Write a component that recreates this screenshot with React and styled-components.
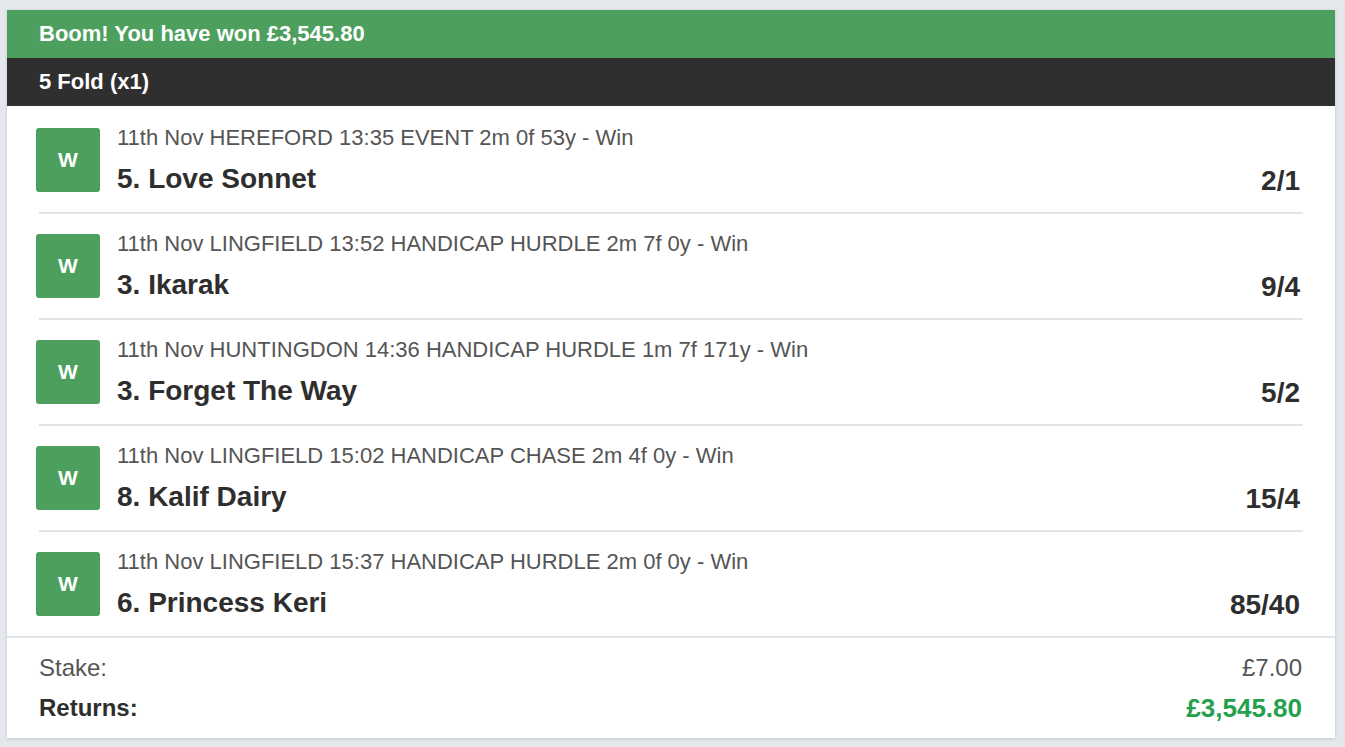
import styled, { createGlobalStyle } from "styled-components";

const GlobalStyle = createGlobalStyle`
  body {
    margin: 0;
    background: #e4e8ec;
    font-family: "Liberation Sans", Arial, Helvetica, sans-serif;
  }
`;

const Page = styled.div`
  padding: 10px 10px 9px 7px;
`;

const Card = styled.div`
  background: #ffffff;
  box-shadow: 0 1px 3px rgba(0, 0, 0, 0.15);
`;

const Banner = styled.div`
  height: 48px;
  display: flex;
  align-items: center;
  padding: 0 32px;
  color: #ffffff;
  font-weight: 700;
  font-size: 22px;
  background: ${(p) => (p.$dark ? "#2f2f2f" : "#4c9f5d")};
`;

const List = styled.div`
  padding-top: 2px;
  border-bottom: 2px solid #e1e5e9;
`;

const Row = styled.div`
  display: flex;
  align-items: flex-start;
  margin: 0 32px;
  padding: 20px 0 17px;
  border-bottom: 2px solid #e1e5e9;

  &:last-child {
    border-bottom: none;
  }
`;

const Badge = styled.div`
  width: 64px;
  height: 64px;
  flex-shrink: 0;
  margin-left: -3px;
  border-radius: 3px;
  background: #4c9f5d;
  color: #ffffff;
  font-weight: 700;
  font-size: 21px;
  display: flex;
  align-items: center;
  justify-content: center;
`;

const Info = styled.div`
  flex: 1;
  margin: -2px 3px 0 17px;
`;

const Meta = styled.div`
  font-size: 22px;
  line-height: 24px;
  color: #555555;
`;

const NameLine = styled.div`
  display: flex;
  justify-content: space-between;
  margin-top: 13px;
  font-size: 28px;
  line-height: 32px;
  font-weight: 700;
  color: #2e2e2e;
`;

const Odds = styled.span`
  position: relative;
  top: 2px;
`;

const Footer = styled.div`
  padding: 15px 33px 15px 32px;
  display: flex;
  flex-direction: column;
  gap: 10px;
`;

const SumLine = styled.div`
  display: flex;
  justify-content: space-between;
  align-items: center;
  height: 30px;
  font-size: 24px;
  color: ${(p) => (p.$bold ? "#2e2e2e" : "#555555")};
  font-weight: ${(p) => (p.$bold ? 700 : 400)};
`;

const Amount = styled.span`
  color: ${(p) => (p.$win ? "#25a04d" : "#555555")};
  font-size: ${(p) => (p.$win ? "26px" : "24px")};
`;

const legs = [
  { meta: "11th Nov HEREFORD 13:35 EVENT 2m 0f 53y - Win", name: "5. Love Sonnet", odds: "2/1" },
  { meta: "11th Nov LINGFIELD 13:52 HANDICAP HURDLE 2m 7f 0y - Win", name: "3. Ikarak", odds: "9/4" },
  { meta: "11th Nov HUNTINGDON 14:36 HANDICAP HURDLE 1m 7f 171y - Win", name: "3. Forget The Way", odds: "5/2" },
  { meta: "11th Nov LINGFIELD 15:02 HANDICAP CHASE 2m 4f 0y - Win", name: "8. Kalif Dairy", odds: "15/4" },
  { meta: "11th Nov LINGFIELD 15:37 HANDICAP HURDLE 2m 0f 0y - Win", name: "6. Princess Keri", odds: "85/40" },
];

const App = () => {
  return (
    <Page>
      <GlobalStyle />
      <Card>
        <Banner>Boom! You have won £3,545.80</Banner>
        <Banner $dark>5 Fold (x1)</Banner>
        <List>
          {legs.map((leg) => (
            <Row key={leg.name}>
              <Badge>W</Badge>
              <Info>
                <Meta>{leg.meta}</Meta>
                <NameLine>
                  <span>{leg.name}</span>
                  <Odds>{leg.odds}</Odds>
                </NameLine>
              </Info>
            </Row>
          ))}
        </List>
        <Footer>
          <SumLine>
            <span>Stake:</span>
            <Amount>£7.00</Amount>
          </SumLine>
          <SumLine $bold>
            <span>Returns:</span>
            <Amount $win>£3,545.80</Amount>
          </SumLine>
        </Footer>
      </Card>
    </Page>
  );
};

export default App;
